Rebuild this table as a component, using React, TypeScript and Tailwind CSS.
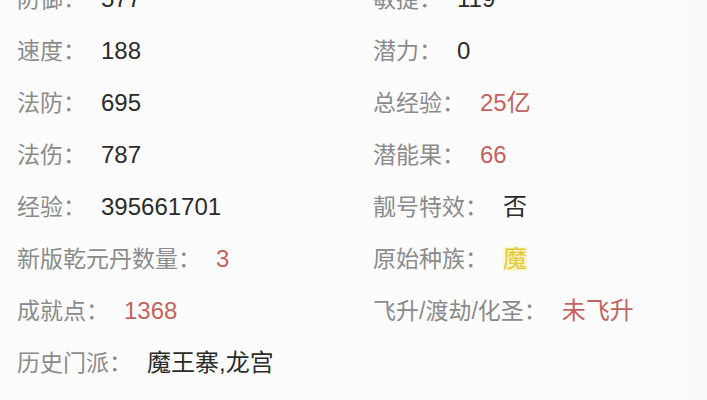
import React from "react";

type Tone = "dark" | "red" | "gold";

interface Stat {
  label: string;
  value: string;
  tone?: Tone;
}

const rows: [Stat, Stat | null][] = [
  [{ label: "防御：", value: "577" }, { label: "敏捷：", value: "119" }],
  [{ label: "速度：", value: "188" }, { label: "潜力：", value: "0" }],
  [{ label: "法防：", value: "695" }, { label: "总经验：", value: "25亿", tone: "red" }],
  [{ label: "法伤：", value: "787" }, { label: "潜能果：", value: "66", tone: "red" }],
  [{ label: "经验：", value: "395661701" }, { label: "靓号特效：", value: "否" }],
  [{ label: "新版乾元丹数量：", value: "3", tone: "red" }, { label: "原始种族：", value: "魔", tone: "gold" }],
  [{ label: "成就点：", value: "1368", tone: "red" }, { label: "飞升/渡劫/化圣：", value: "未飞升", tone: "red" }],
  [{ label: "历史门派：", value: "魔王寨,龙宫" }, null],
];

function Cell({ stat }: { stat: Stat | null }) {
  if (!stat) return <div />;
  return (
    <div className="flex items-center h-[52px] whitespace-nowrap">
      <span className="text-[#8b8b8b] text-[23px]">{stat.label}</span>
      <span
        className={
          "ml-[15px] text-[24px] " +
          (stat.tone === "red"
            ? "text-[#c4625f]"
            : stat.tone === "gold"
            ? "text-[#e4c93a] bg-[#fbf5cf]"
            : "text-[#2b2b2b]")
        }
      >
        {stat.value}
      </span>
    </div>
  );
}

export default function App() {
  return (
    <div
      className="w-[707px] h-[400px] overflow-hidden bg-[#fcfcfc] leading-none"
      style={{ fontFamily: '"Liberation Sans", "Noto Sans CJK SC", sans-serif' }}
    >
      <div className="flex h-full">
        <div className="flex-1 pl-[17px]">
          <div className="grid grid-cols-[356px_1fr] -mt-[27px]">
            {rows.map(([left, right], i) => (
              <React.Fragment key={i}>
                <Cell stat={left} />
                <Cell stat={right} />
              </React.Fragment>
            ))}
          </div>
        </div>
        <div className="w-[17px] bg-[#f9f9f9]" />
      </div>
    </div>
  );
}
